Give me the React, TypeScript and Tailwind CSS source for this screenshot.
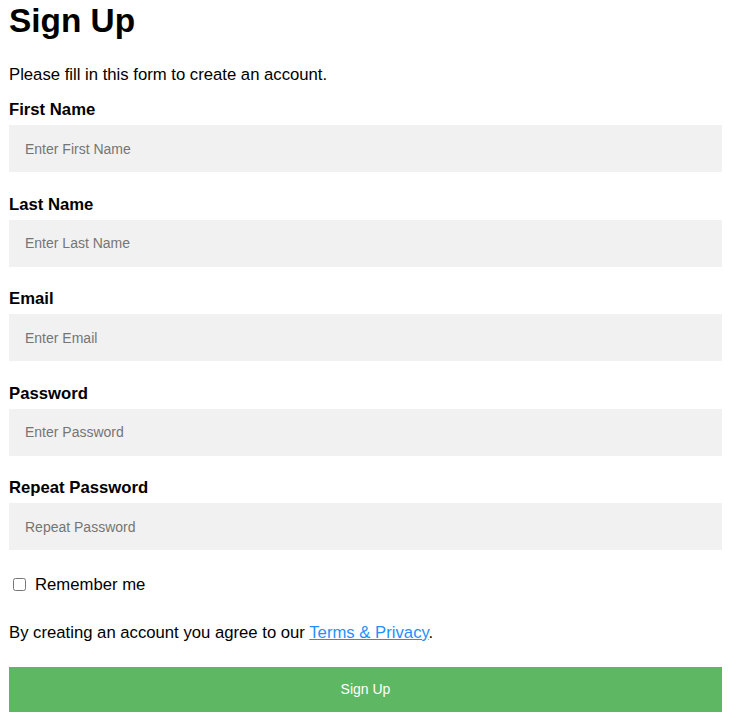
import { useState } from "react";

const fields = [
  { label: "First Name", placeholder: "Enter First Name", type: "text" },
  { label: "Last Name", placeholder: "Enter Last Name", type: "text" },
  { label: "Email", placeholder: "Enter Email", type: "text" },
  { label: "Password", placeholder: "Enter Password", type: "password" },
  { label: "Repeat Password", placeholder: "Repeat Password", type: "password" },
];

export default function App() {
  const [remember, setRemember] = useState(false);

  return (
    <main className="min-h-screen bg-white font-['Liberation_Sans',Arial,sans-serif] text-black">
      <form className="w-[722px] pl-[9px]" onSubmit={(e) => e.preventDefault()}>
        <h1 className="mt-[1px] text-[33.4px] font-bold leading-[40px]">Sign Up</h1>
        <p className="mt-[24px] text-[16.7px] leading-[20px]">Please fill in this form to create an account.</p>

        <div className="mt-[15px]">
          {fields.map((f) => (
            <div key={f.label} className="mb-[22.5px]">
              <label className="block text-[16.7px] font-bold leading-[20px]">{f.label}</label>
              <input
                type={f.type}
                placeholder={f.placeholder}
                className="mt-[5px] block h-[47px] w-full bg-[#f1f1f1] pl-[16px] text-[14px] placeholder:text-[#757575] outline-none"
              />
            </div>
          ))}
        </div>

        <label className="flex items-start pt-[2px] text-[16.7px] leading-[20px]">
          <input
            type="checkbox"
            checked={remember}
            onChange={(e) => setRemember(e.target.checked)}
            className="ml-[4px] mr-[9px] mt-[3.5px] h-[13px] w-[13px]"
          />
          Remember me
        </label>

        <p className="mt-[28px] text-[16.7px] leading-[20px]">
          By creating an account you agree to our{" "}
          <a href="#" className="text-[#1e90ff] underline">
            Terms &amp; Privacy
          </a>
          .
        </p>

        <button
          type="submit"
          className="mt-[24px] block h-[45px] w-full bg-[#5eb762] text-[14px] text-white"
        >
          Sign Up
        </button>
      </form>
    </main>
  );
}
